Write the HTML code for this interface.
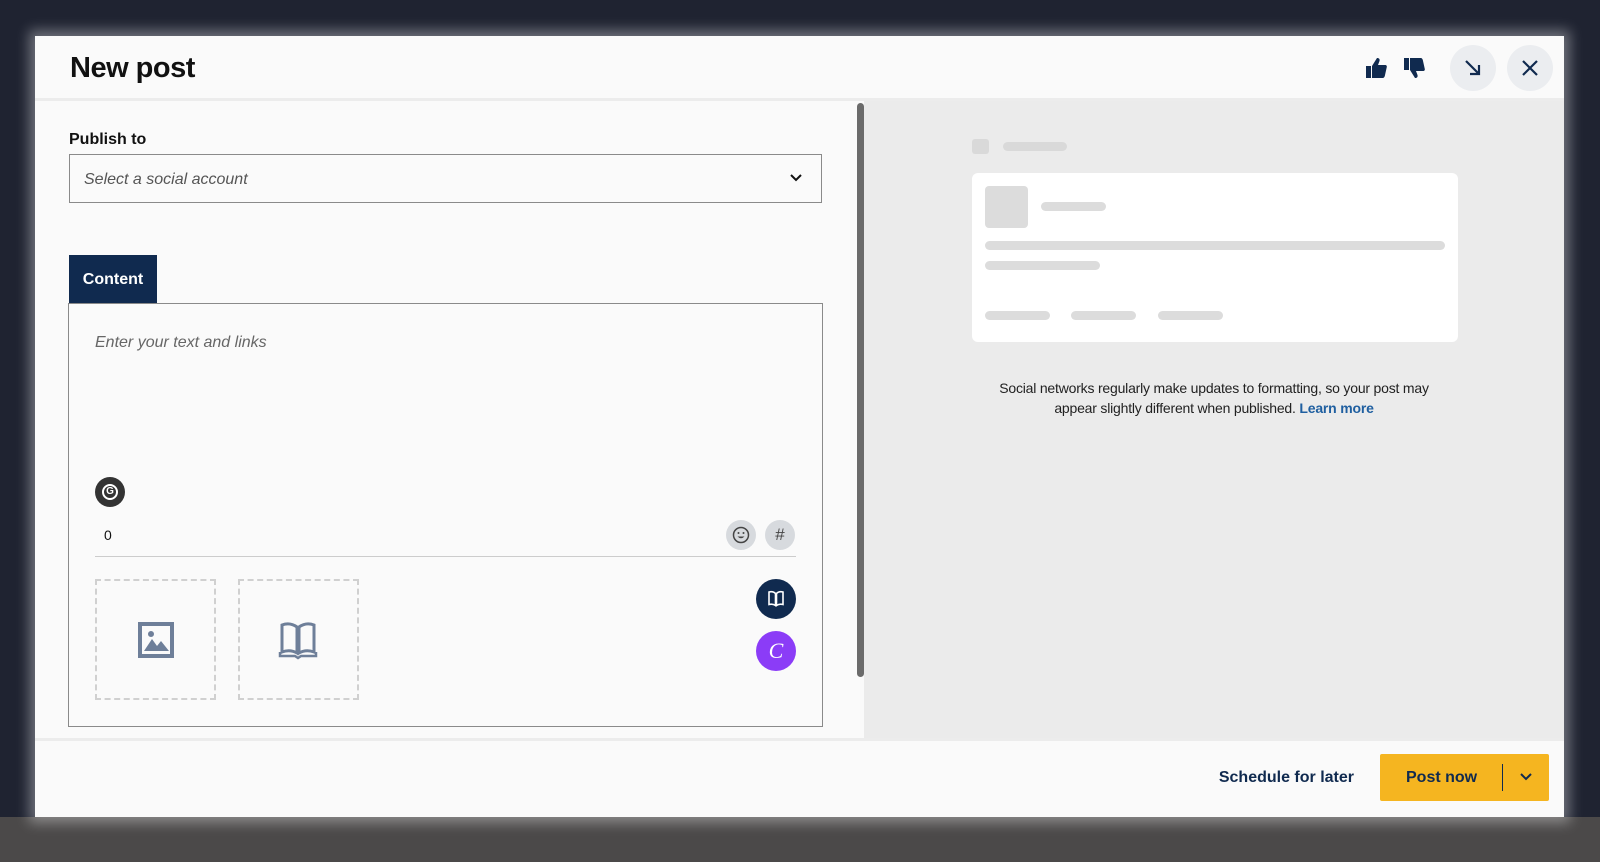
<!DOCTYPE html>
<html><head><meta charset="utf-8"><style>
*{box-sizing:border-box;margin:0;padding:0}
body{width:1600px;height:862px;overflow:hidden;background:#1f2331;font-family:"Liberation Sans",sans-serif;position:relative}
.abs{position:absolute}
.bot{left:0;top:817px;width:1600px;height:45px;background:#4b4949}
.modal{left:35px;top:36px;width:1529px;height:781px;background:#fafafa;box-shadow:0 0 12px 6px rgba(255,255,255,.35)}
.t{color:#111;font-weight:bold}
.btnc{border-radius:50%;background:#ebedf0;width:46px;height:46px;display:flex;align-items:center;justify-content:center}
</style></head><body>
<div class="abs bot"></div>
<div class="abs modal"></div>
<div class="abs" style="left:35px;top:98px;width:1529px;height:3px;background:#ececec"></div>
<div class="abs t" style="left:70px;top:52px;font-size:29px;letter-spacing:-0.5px">New post</div>
<svg class="abs" style="left:1364px;top:56px" width="24" height="24" viewBox="0 0 24 24"><path d="M2 10h5v12H2zM8 10l5-8c2 0 3 1 2.5 3L14 9h7c1.5 0 2 1 1.8 2l-2 9c-.3 1-1 2-2 2H8z" fill="#102a4f"/></svg>
<svg class="abs" style="left:1402px;top:56px" width="24" height="24" viewBox="0 0 24 24" transform="scale(1,-1)"><path d="M2 10h5v12H2zM8 10l5-8c2 0 3 1 2.5 3L14 9h7c1.5 0 2 1 1.8 2l-2 9c-.3 1-1 2-2 2H8z" fill="#102a4f"/></svg>
<div class="abs btnc" style="left:1450px;top:45px"><svg width="20" height="20" viewBox="0 0 20 20"><path d="M3 3l13 13M16 7v9H7" stroke="#102a4f" stroke-width="2.2" fill="none"/></svg></div>
<div class="abs btnc" style="left:1507px;top:45px"><svg width="20" height="20" viewBox="0 0 20 20"><path d="M3 3l14 14M17 3L3 17" stroke="#102a4f" stroke-width="2.2" fill="none"/></svg></div>
<!-- right panel -->
<div class="abs" style="left:864px;top:101px;width:700px;height:639px;background:#ebebeb"></div>
<div class="abs" style="left:972px;top:139px;width:17px;height:15px;background:#d9d9d9;border-radius:3px"></div>
<div class="abs" style="left:1003px;top:142px;width:64px;height:9px;background:#d9d9d9;border-radius:5px"></div>
<div class="abs" style="left:972px;top:173px;width:486px;height:169px;background:#fff;border-radius:6px"></div>
<div class="abs" style="left:985px;top:186px;width:43px;height:42px;background:#dcdcdc;border-radius:4px"></div>
<div class="abs" style="left:1041px;top:202px;width:65px;height:9px;background:#dcdcdc;border-radius:5px"></div>
<div class="abs" style="left:985px;top:241px;width:460px;height:9px;background:#dcdcdc;border-radius:5px"></div>
<div class="abs" style="left:985px;top:261px;width:115px;height:9px;background:#dcdcdc;border-radius:5px"></div>
<div class="abs" style="left:985px;top:311px;width:65px;height:9px;background:#dcdcdc;border-radius:5px"></div>
<div class="abs" style="left:1071px;top:311px;width:65px;height:9px;background:#dcdcdc;border-radius:5px"></div>
<div class="abs" style="left:1158px;top:311px;width:65px;height:9px;background:#dcdcdc;border-radius:5px"></div>
<div class="abs" style="left:994px;top:378px;width:440px;text-align:center;font-size:14px;line-height:20px;color:#222;letter-spacing:-0.2px">Social networks regularly make updates to formatting, so your post may appear slightly different when published. <b style="color:#1f5fa0">Learn more</b></div>
<!-- left -->
<div class="abs" style="left:857px;top:103px;width:7px;height:574px;background:#6b6b6b;border-radius:4px"></div>
<div class="abs t" style="left:69px;top:131px;font-size:16px">Publish to</div>
<div class="abs" style="left:69px;top:154px;width:753px;height:49px;border:1px solid #8a8a8a;background:#fafafa"></div>
<div class="abs" style="left:84px;top:171px;font-size:16px;font-style:italic;color:#555">Select a social account</div>
<svg class="abs" style="left:789px;top:172px" width="14" height="12" viewBox="0 0 14 12"><path d="M2 3l5 5 5-5" stroke="#111" stroke-width="2" fill="none"/></svg>
<div class="abs" style="left:69px;top:255px;width:88px;height:49px;background:#102a4f;color:#fff;font-weight:bold;font-size:16px;line-height:49px;text-align:center">Content</div>
<div class="abs" style="left:68px;top:303px;width:755px;height:424px;border:1px solid #8a8a8a"></div>
<div class="abs" style="left:95px;top:334px;font-size:16px;font-style:italic;color:#666">Enter your text and links</div>
<div class="abs" style="left:95px;top:477px;width:30px;height:30px;border-radius:50%;background:#333;display:flex;align-items:center;justify-content:center"><div style="width:16px;height:16px;border-radius:50%;border:2px solid #fff;color:#fff;font-size:10px;line-height:12px;text-align:center;font-weight:bold">G</div></div>
<div class="abs" style="left:104px;top:527px;font-size:14px;color:#111">0</div>
<div class="abs" style="left:726px;top:520px;width:30px;height:30px;border-radius:50%;background:#d7dade;display:flex;align-items:center;justify-content:center"><svg width="18" height="18" viewBox="0 0 18 18"><circle cx="9" cy="9" r="7.5" stroke="#444" stroke-width="1.5" fill="none"/><circle cx="6.5" cy="7" r="1" fill="#444"/><circle cx="11.5" cy="7" r="1" fill="#444"/><path d="M5.5 10.5q3.5 3.5 7 0z" fill="#444"/></svg></div>
<div class="abs" style="left:765px;top:520px;width:30px;height:30px;border-radius:50%;background:#d7dade;text-align:center;line-height:30px;font-size:17px;color:#444">#</div>
<div class="abs" style="left:95px;top:556px;width:701px;height:1px;background:#ccc"></div>
<div class="abs" style="left:95px;top:579px;width:121px;height:121px;border:2px dashed #d0d0d0"></div>
<div class="abs" style="left:238px;top:579px;width:121px;height:121px;border:2px dashed #d0d0d0"></div>
<svg class="abs" style="left:136px;top:620px" width="40" height="40" viewBox="0 0 40 40"><rect x="2" y="2" width="36" height="36" fill="#6e7f99"/><rect x="6" y="6" width="28" height="28" fill="#fafafa"/><circle cx="15" cy="14" r="3" fill="#6e7f99"/><path d="M8 31l8-12 5 7 4-5 8 10z" fill="#6e7f99"/></svg>
<svg class="abs" style="left:278px;top:620px" width="40" height="40" viewBox="0 0 40 40"><path d="M4 5q8-3 15 2v26q-7-4-15-1zM36 5q-8-3-15 2v26q7-4 15-1z" stroke="#6e7f99" stroke-width="3" fill="none"/><path d="M2 32v4h15l3 2 3-2h15v-4" stroke="#6e7f99" stroke-width="2.5" fill="none"/></svg>
<div class="abs" style="left:756px;top:579px;width:40px;height:40px;border-radius:50%;background:#102a4f;display:flex;align-items:center;justify-content:center"><svg width="20" height="20" viewBox="0 0 20 20"><path d="M3 3q4-1 6.5 1.5v12q-3-2-6.5-1zM17 3q-4-1-6.5 1.5v12q3-2 6.5-1z" stroke="#fff" stroke-width="1.6" fill="none"/></svg></div>
<div class="abs" style="left:756px;top:631px;width:40px;height:40px;border-radius:50%;background:#8b3cf7;color:#fff;text-align:center;line-height:40px;font-size:22px;font-style:italic;font-family:'Liberation Serif',serif">C</div>
<!-- footer -->
<div class="abs" style="left:35px;top:738px;width:1529px;height:3px;background:#ececec"></div>
<div class="abs" style="left:1190px;top:769px;width:164px;text-align:right;font-size:16px;font-weight:bold;color:#102a4f">Schedule for later</div>
<div class="abs" style="left:1380px;top:754px;width:169px;height:47px;background:#f5b520;border-radius:2px"></div>
<div class="abs" style="left:1406px;top:769px;font-size:16px;font-weight:bold;color:#102a4f">Post now</div>
<div class="abs" style="left:1502px;top:764px;width:1px;height:27px;background:#102a4f"></div>
<svg class="abs" style="left:1519px;top:771px" width="14" height="12" viewBox="0 0 14 12"><path d="M2 3l5 5 5-5" stroke="#102a4f" stroke-width="2" fill="none"/></svg>
</body></html>
